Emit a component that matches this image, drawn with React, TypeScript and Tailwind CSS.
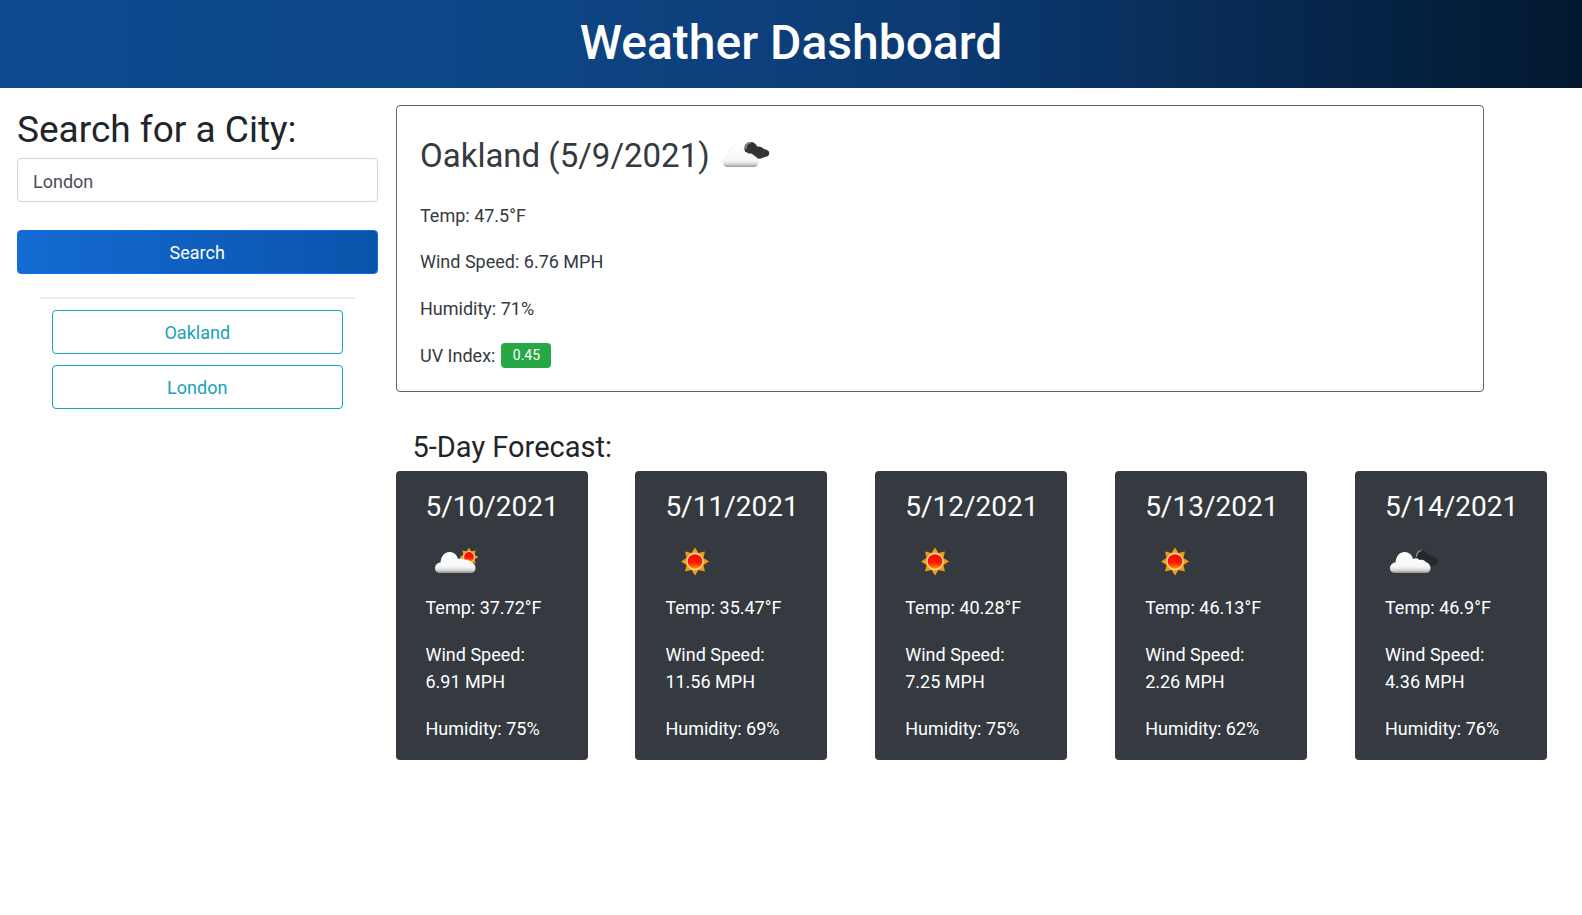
import React from 'react';

type Icon = 'cloudDark' | 'cloudSun' | 'sun' | 'cloudGrey';

const FORECAST: { date: string; icon: Icon; temp: string; wind: string; humidity: string }[] = [
  { date: '5/10/2021', icon: 'cloudSun', temp: '37.72', wind: '6.91', humidity: '75' },
  { date: '5/11/2021', icon: 'sun', temp: '35.47', wind: '11.56', humidity: '69' },
  { date: '5/12/2021', icon: 'sun', temp: '40.28', wind: '7.25', humidity: '75' },
  { date: '5/13/2021', icon: 'sun', temp: '46.13', wind: '2.26', humidity: '62' },
  { date: '5/14/2021', icon: 'cloudGrey', temp: '46.9', wind: '4.36', humidity: '76' },
];

const CLOUD = 'M5 33C1.500 33 0 30.500 0 28C0 25 2.500 22.500 5.500 22.500C6 16 10 12 14.500 12C19 12 22 15 23 19C25 17.500 28 18 29.500 20C31 19.500 34 19.500 36 22C39 23 40.500 25.500 40.500 28C40.500 31 38.500 33 36 33Z';
const SUN = 'M25 12.500L28.250 17.650L34.200 16.300L32.850 22.250L38 25.500L32.850 28.750L34.200 34.700L28.250 33.350L25 38.500L21.750 33.350L15.800 34.700L17.150 28.750L12 25.500L17.150 22.250L15.800 16.300L21.750 17.650Z';
const DARK = 'M26 24C24 18 27 14 31 14C34 14 36 16 37 18.500C40 18 42 19.500 43 21C46 21.500 48 23 48 25C48 27.500 46 29 43.500 29C41.500 31 38 31 36 30Z';

function Defs() {
  return (
    <defs>
      <linearGradient id="cloudFill" x1="0" y1="0" x2="0" y2="1">
        <stop offset="0%" stopColor="#ffffff" />
        <stop offset="70%" stopColor="#f6f6f6" />
        <stop offset="86%" stopColor="#d8d8d8" />
        <stop offset="100%" stopColor="#8f8f8f" />
      </linearGradient>
      <linearGradient id="sunFill" x1="0" y1="0" x2="0" y2="1">
        <stop offset="0%" stopColor="#f01000" />
        <stop offset="60%" stopColor="#ff1a00" />
        <stop offset="100%" stopColor="#ffa000" />
      </linearGradient>
    </defs>
  );
}

function WeatherIcon({ icon }: { icon: Icon }) {
  if (icon === 'sun') {
    return (
      <svg width="50" height="50" viewBox="0 0 50 50" className="ml-[5px] mt-[1px]">
        <Defs />
        <g transform="translate(25 25.500) scale(1.080) translate(-25 -25.500)">
          <path d={SUN} fill="#f39a12" />
          <circle cx="25" cy="25.500" r="8" fill="#f9e2b8" />
          <circle cx="25" cy="25.500" r="6.800" fill="url(#sunFill)" />
        </g>
      </svg>
    );
  }
  if (icon === 'cloudSun') {
    return (
      <svg width="50" height="50" viewBox="0 0 50 50" className="ml-[5px]">
        <Defs />
        <g transform="translate(38 21) scale(.72) translate(-25 -25.500)">
          <path d={SUN} fill="#f39a12" />
          <circle cx="25" cy="25.500" r="8" fill="#f9e2b8" />
          <circle cx="25" cy="25.500" r="6.800" fill="url(#sunFill)" />
        </g>
        <path d={CLOUD} fill="url(#cloudFill)" transform="translate(4 4)" />
      </svg>
    );
  }
  if (icon === 'cloudGrey') {
    return (
      <svg width="50" height="50" viewBox="0 0 50 50" className="ml-[5px]">
        <Defs />
        <path d={DARK} fill="#25272a" />
        <path d="M26.500 21C26.500 17 28.500 14.800 31.500 14.500" fill="none" stroke="#85878b" strokeWidth="1.500" />
        <path d={CLOUD} fill="url(#cloudFill)" transform="translate(0 4)" />
      </svg>
    );
  }
  return (
    <svg width="60" height="50" viewBox="0 0 60 50" className="ml-[-2px]">
      <Defs />
      <g transform="translate(-1.500 -2) scale(1.100 1)">
        <path d={DARK} fill="#333333" />
        <path d="M26.500 21C26.500 17 28.500 14.800 31.500 14.500" fill="none" stroke="#8a8a8a" strokeWidth="1.500" />
      </g>
      <path d={CLOUD} fill="url(#cloudFill)" stroke="#e2e2e2" strokeWidth=".5" transform="translate(5 4) scale(.87 1)" />
    </svg>
  );
}

export default function App() {
  return (
    <div className="min-h-[915px] bg-white font-['Roboto',sans-serif] text-[#212529]">
      <header className="h-[88px] flex items-center justify-center bg-[linear-gradient(90deg,#0d4a8f_0%,#0e4787_30%,#0c3a72_60%,#02182f_100%)]">
        <h1 className="text-[48px] font-medium text-white leading-none -mt-[3px]">Weather Dashboard</h1>
      </header>

      <div className="flex">
        <aside className="w-[395.500px] shrink-0 pl-[17px] pr-[18px] pt-[18px]">
          <h2 className="text-[37px] leading-[47px] font-normal mb-[5px]">Search for a City:</h2>
          <input
            readOnly
            value="London"
            className="block w-full h-[44px] px-[15px] pt-[2px] rounded-[4px] border border-[#ced4da] text-[#495057] text-[18px] outline-none"
          />
          <button className="block w-full h-[44px] mt-[28px] rounded-[4px] border border-[#0f6fe6] bg-[linear-gradient(90deg,#146bd2,#0a53ab)] text-white text-[18px]">
            Search
          </button>
          <div className="mx-[23px] mt-[23px] border-t-2 border-[#eceef0]" />
          <div className="mt-[11px] px-[35px] flex flex-col gap-[11px]">
            {['Oakland', 'London'].map(city => (
              <button key={city} className="h-[44px] rounded-[4px] border border-[#17a2b8] text-[#17a2b8] text-[18px]">
                {city}
              </button>
            ))}
          </div>
        </aside>

        <main className="flex-1 pt-[17px] pr-[35px]">
          <section className="w-[1088px] h-[287px] rounded-[4px] border border-[#5f656b] px-[23.500px] pt-[24px]">
            <div className="flex items-center h-[50px] gap-[10px]">
              <h3 className="text-[33px] text-[#343a40] font-normal leading-none">Oakland (5/9/2021)</h3>
              <WeatherIcon icon="cloudDark" />
            </div>
            <div className="mt-[22px] flex flex-col gap-[19.400px] text-[18px] leading-[27px] text-[#343a40]">
              <p>Temp: 47.5°F</p>
              <p>Wind Speed: 6.76 MPH</p>
              <p>Humidity: 71%</p>
              <p className="flex items-center gap-[6px] mt-[1px]">
                UV Index:
                <span className="inline-flex items-center justify-center w-[50px] h-[25px] rounded-[4px] bg-[#28a745] text-white text-[14px]">0.45</span>
              </p>
            </div>
          </section>

          <h4 className="mt-[38px] pl-[17px] text-[29px] leading-[34px] font-normal">5-Day Forecast:</h4>

          <div className="mt-[7px] flex justify-between">
            {FORECAST.map(day => (
              <article key={day.date} className="w-[192px] h-[289px] rounded-[4px] bg-[#343a40] text-white px-[30px] pt-[18px]">
                <h5 className="text-[28px] leading-[36px] font-normal">{day.date}</h5>
                <div className="mt-[11px] h-[50px]">
                  <WeatherIcon icon={day.icon} />
                </div>
                <div className="mt-[8px] flex flex-col gap-[19px] text-[18px] leading-[27.500px]">
                  <p>Temp: {day.temp}°F</p>
                  <p>
                    Wind Speed:
                    <br />
                    {day.wind} MPH
                  </p>
                  <p>Humidity: {day.humidity}%</p>
                </div>
              </article>
            ))}
          </div>
        </main>
      </div>
    </div>
  );
}
